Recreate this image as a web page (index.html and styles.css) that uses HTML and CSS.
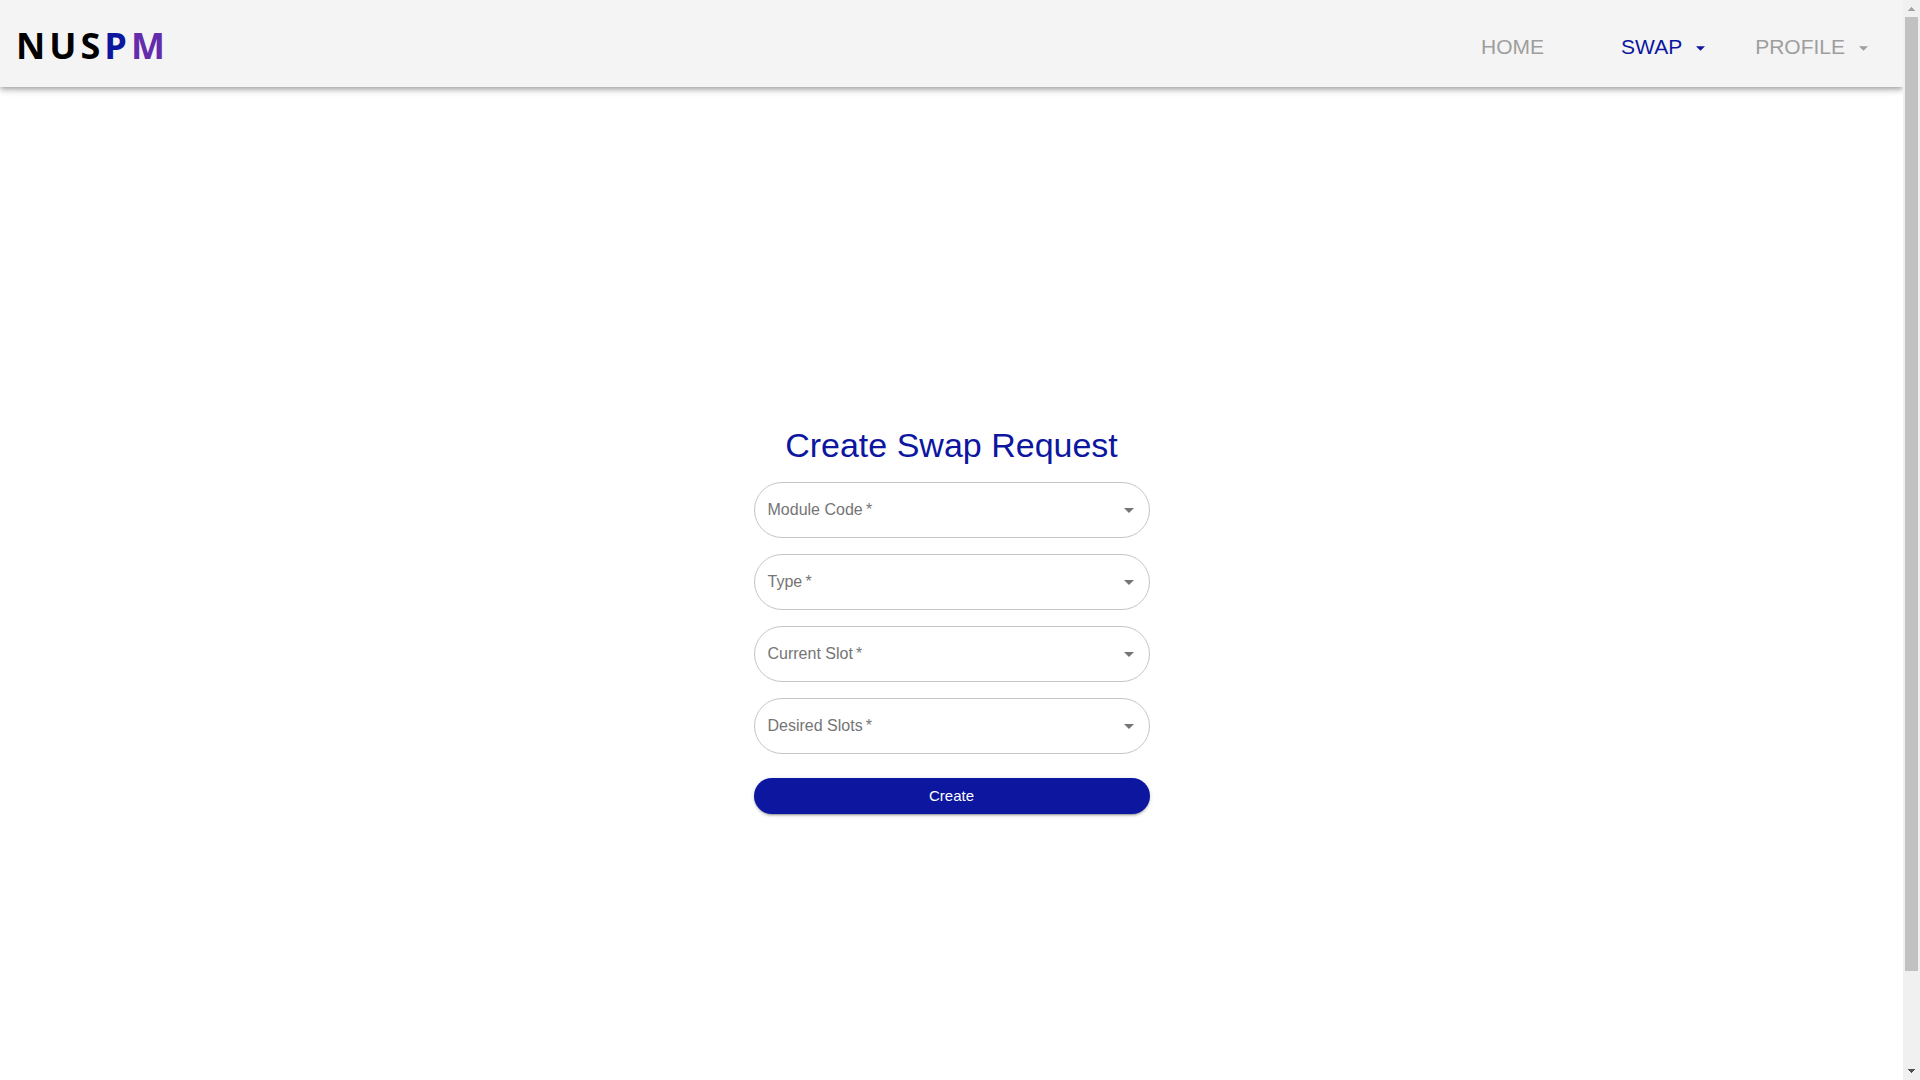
FILE: index.html
```html
<!DOCTYPE html>
<html lang="en">
<head>
<meta charset="utf-8">
<title>NUSPM - Create Swap Request</title>
<link rel="stylesheet" href="styles.css">
</head>
<body>
<div class="app">
  <div class="page">
    <header class="topbar">
      <a class="logo" href="#">NUS<span class="logo-p">P</span><span class="logo-m">M</span></a>
      <nav class="nav">
        <a class="nav-item nav-home" href="#">HOME</a>
        <button class="nav-item nav-active" type="button">SWAP
          <svg class="caret" viewBox="0 0 10 5" aria-hidden="true"><path d="M0 0h10L5 5z"/></svg>
        </button>
        <button class="nav-item" type="button">PROFILE
          <svg class="caret" viewBox="0 0 10 5" aria-hidden="true"><path d="M0 0h10L5 5z"/></svg>
        </button>
      </nav>
    </header>
    <main class="content">
      <form class="form">
        <h1 class="title">Create Swap Request</h1>
        <div class="field">
          <select class="select" id="module" required><option value=""></option></select>
          <label class="label" for="module">Module Code&#8201;*</label>
          <svg class="arrow" viewBox="0 0 10 5" aria-hidden="true"><path d="M0 0h10L5 5z"/></svg>
        </div>
        <div class="field">
          <select class="select" id="type" required><option value=""></option></select>
          <label class="label" for="type">Type&#8201;*</label>
          <svg class="arrow" viewBox="0 0 10 5" aria-hidden="true"><path d="M0 0h10L5 5z"/></svg>
        </div>
        <div class="field">
          <select class="select" id="current" required><option value=""></option></select>
          <label class="label" for="current">Current Slot&#8201;*</label>
          <svg class="arrow" viewBox="0 0 10 5" aria-hidden="true"><path d="M0 0h10L5 5z"/></svg>
        </div>
        <div class="field">
          <select class="select" id="desired" required><option value=""></option></select>
          <label class="label" for="desired">Desired Slots&#8201;*</label>
          <svg class="arrow" viewBox="0 0 10 5" aria-hidden="true"><path d="M0 0h10L5 5z"/></svg>
        </div>
        <button class="submit" type="submit">Create</button>
      </form>
    </main>
  </div>
  <div class="scrollbar" aria-hidden="true">
    <svg class="scroll-arrow scroll-up" viewBox="0 0 17 17"><path d="M5 11h7v-1h-1V9h-1V8H9V7H8v1H7v1H6v1H5z"/></svg>
    <div class="scroll-track"><div class="scroll-thumb"></div></div>
    <svg class="scroll-arrow" viewBox="0 0 17 17"><path d="M5 6h7v1h-1v1h-1v1H9v1H8V9H7V8H6V7H5z"/></svg>
  </div>
</div>
</body>
</html>
```
FILE: styles.css
```css
* {
  box-sizing: border-box;
}

body {
  margin: 0;
  font-family: "Liberation Sans", Arial, sans-serif;
  background: #fff;
}

.app {
  display: flex;
  height: 100vh;
  overflow: hidden;
}

.page {
  flex: 1;
  min-width: 0;
}

.topbar {
  display: flex;
  align-items: center;
  justify-content: space-between;
  height: 87px;
  padding: 5px 10px 0 16px;
  background: #f4f4f4;
  box-shadow: 0 2px 4px -1px rgba(0, 0, 0, 0.2), 0 4px 5px 0 rgba(0, 0, 0, 0.14), 0 1px 10px 0 rgba(0, 0, 0, 0.12);
}

.logo {
  font-family: "Open Sans", "Noto Sans", sans-serif;
  font-size: 36px;
  line-height: 48px;
  font-weight: 700;
  letter-spacing: 4px;
  color: #000;
  text-decoration: none;
}

.logo-p {
  color: #0d169f;
}

.logo-m {
  color: #642cab;
}

.nav {
  display: flex;
  align-items: center;
  padding-top: 2px;
}

.nav-item {
  display: flex;
  align-items: center;
  gap: 14px;
  padding: 8px 25px;
  border: 0;
  background: none;
  font: 21px/24px "Liberation Sans", Arial, sans-serif;
  color: #9e9e9e;
  text-decoration: none;
  cursor: pointer;
}

.nav-home {
  padding-right: 52px;
}

.nav-active {
  color: #0d169f;
}

.caret {
  width: 9px;
  height: 5px;
  margin-top: 2px;
  fill: currentColor;
}

.content {
  display: flex;
  align-items: center;
  justify-content: center;
  min-height: 100vh;
  padding: 0 16px 16px;
}

.form {
  display: flex;
  flex-direction: column;
  gap: 16px;
  width: 100%;
  max-width: 396px;
}

.title {
  margin: 0;
  font-size: 34px;
  line-height: 42px;
  font-weight: 400;
  text-align: center;
  color: #0d169f;
}

.field {
  display: grid;
  align-items: center;
}

.select,
.label,
.arrow {
  grid-area: 1 / 1;
}

.select {
  appearance: none;
  width: 100%;
  height: 56px;
  padding: 0 32px 0 14px;
  border: 1px solid #c4c4c4;
  border-radius: 28px;
  background: #fff;
  font: 16px "Liberation Sans", Arial, sans-serif;
}

.label {
  padding-left: 14px;
  font-size: 16px;
  line-height: 24px;
  color: #757575;
  pointer-events: none;
}

.arrow {
  justify-self: end;
  width: 10px;
  height: 5px;
  margin-right: 16px;
  fill: #757575;
  pointer-events: none;
}

.submit {
  height: 36px;
  margin-top: 8px;
  border: 0;
  border-radius: 18px;
  background: #0d169f;
  color: #fff;
  font: 15px/24px "Liberation Sans", Arial, sans-serif;
  box-shadow: 0 3px 1px -2px rgba(0, 0, 0, 0.2), 0 2px 2px 0 rgba(0, 0, 0, 0.14), 0 1px 5px 0 rgba(0, 0, 0, 0.12);
  cursor: pointer;
}

.scrollbar {
  z-index: 1;
  display: flex;
  flex-direction: column;
  width: 17px;
  background: #f0f0f0;
}

.scroll-arrow {
  width: 17px;
  height: 17px;
  fill: #505050;
}

.scroll-up {
  fill: #a3a3a3;
}

.scroll-track {
  flex: 1;
  padding: 0 2px;
}

.scroll-thumb {
  height: 91.2%;
  background: #c1c1c1;
}
```
